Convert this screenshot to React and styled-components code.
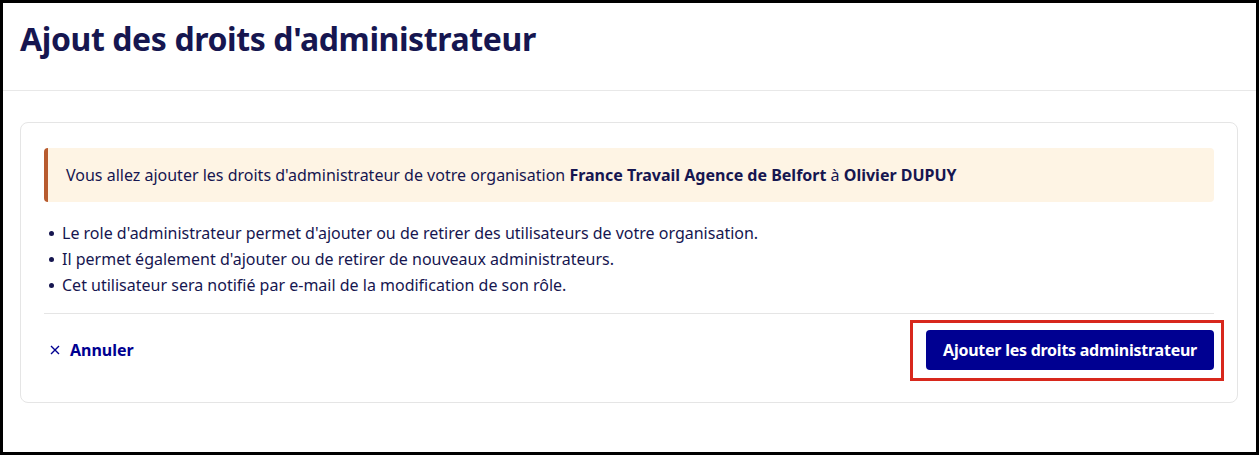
import styled, { createGlobalStyle } from "styled-components";

const GlobalStyle = createGlobalStyle`
  * {
    box-sizing: border-box;
  }
  body {
    margin: 0;
    font-family: "Noto Sans", "Open Sans", sans-serif;
    color: #161650;
    background: #ffffff;
  }
`;

const Frame = styled.div`
  height: 455px;
  border: 3px solid #000000;
  background: #ffffff;
`;

const Header = styled.header`
  height: 88px;
  padding: 16px 17px 0;
  border-bottom: 1px solid #e8e8e8;
`;

const Title = styled.h1`
  margin: 0;
  font-size: 32px;
  line-height: 40px;
  font-weight: 700;
  letter-spacing: -0.4px;
  color: #161650;
`;

const Body = styled.main`
  padding: 31px 18px 0 17px;
`;

const Card = styled.section`
  border: 1px solid #e5e5e5;
  border-radius: 8px;
  padding: 25px 23px 32px 23px;
`;

const Alert = styled.div`
  background: #fef4e4;
  border-left: 4px solid #b85b2e;
  border-radius: 4px;
  padding: 15px 18px;
  font-size: 16px;
  line-height: 24px;

  strong {
    font-weight: 700;
  }
`;

const List = styled.ul`
  list-style: none;
  margin: 18px 0 0 0;
  padding: 0;
`;

const Item = styled.li`
  position: relative;
  padding-left: 18px;
  font-size: 16px;
  line-height: 26px;

  &::before {
    content: "";
    position: absolute;
    left: 5px;
    top: 11px;
    width: 5px;
    height: 5px;
    border-radius: 50%;
    background: currentColor;
  }
`;

const Footer = styled.div`
  margin-top: 15px;
  padding-top: 16px;
  border-top: 1px solid #e5e5e5;
  display: flex;
  align-items: center;
  justify-content: space-between;
`;

const CancelLink = styled.button`
  display: flex;
  align-items: center;
  gap: 10px;
  border: none;
  background: none;
  padding: 0 0 0 6px;
  font-family: inherit;
  font-size: 16px;
  font-weight: 700;
  color: #000091;
  cursor: pointer;
`;

const Highlight = styled.div`
  position: relative;
`;

const Annotation = styled.span`
  position: absolute;
  inset: -10px -10px -11px -16px;
  border: 3px solid #d8281c;
  pointer-events: none;
`;

const PrimaryButton = styled.button`
  display: block;
  height: 40px;
  padding: 0 17px;
  border: none;
  border-radius: 4px;
  background: #000091;
  color: #ffffff;
  font-family: inherit;
  font-size: 16px;
  font-weight: 700;
  letter-spacing: -0.25px;
  cursor: pointer;
`;

const CloseIcon = () => (
  <svg width="10" height="10" viewBox="0 0 10 10" aria-hidden="true">
    <path d="M1 1 L9 9 M9 1 L1 9" stroke="currentColor" strokeWidth="1.4" />
  </svg>
);

const App = () => {
  return (
    <>
      <GlobalStyle />
      <Frame>
        <Header>
          <Title>Ajout des droits d'administrateur</Title>
        </Header>
        <Body>
          <Card>
            <Alert>
              Vous allez ajouter les droits d'administrateur de votre organisation{" "}
              <strong>France Travail Agence de Belfort</strong> à{" "}
              <strong>Olivier DUPUY</strong>
            </Alert>
            <List>
              <Item>
                Le role d'administrateur permet d'ajouter ou de retirer des utilisateurs de
                votre organisation.
              </Item>
              <Item>Il permet également d'ajouter ou de retirer de nouveaux administrateurs.</Item>
              <Item>Cet utilisateur sera notifié par e-mail de la modification de son rôle.</Item>
            </List>
            <Footer>
              <CancelLink>
                <CloseIcon />
                Annuler
              </CancelLink>
              <Highlight>
                <PrimaryButton>Ajouter les droits administrateur</PrimaryButton>
                <Annotation />
              </Highlight>
            </Footer>
          </Card>
        </Body>
      </Frame>
    </>
  );
};

export default App;
